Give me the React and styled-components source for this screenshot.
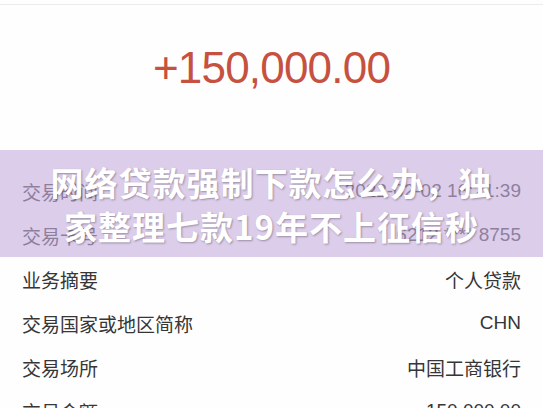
import React from "react";
import styled, { createGlobalStyle } from "styled-components";

const Global = createGlobalStyle`
  html, body { margin: 0; padding: 0; background: #fefefe; overflow: hidden; }
  body { font-family: "Liberation Sans", "Noto Sans CJK SC", sans-serif; }
`;

const Page = styled.div`
  position: relative;
  width: 543px;
  height: 408px;
  overflow: hidden;
  background: #fefefe;
`;

const TopLine = styled.div`
  height: 4px;
  border-bottom: 1px solid #ececec;
`;

const AmountBlock = styled.div`
  height: 164px;
  box-sizing: border-box;
  padding-top: 40px;
  text-align: center;
`;

const Amount = styled.div`
  font-family: "Liberation Sans", sans-serif;
  font-size: 44px;
  line-height: 46px;
  letter-spacing: -0.8px;
  color: #c65140;
`;

const List = styled.div`
  display: flex;
  flex-direction: column;
`;

const Row = styled.div`
  display: flex;
  justify-content: space-between;
  align-items: center;
  height: 44px;
  padding: 0 22px;
  font-size: 19px;
  color: #363636;
  white-space: nowrap;
`;

const Banner = styled.div`
  position: absolute;
  left: 0;
  right: 0;
  top: 150px;
  height: 107px;
  background: rgba(197, 173, 222, 0.61);
  display: flex;
  flex-direction: column;
  align-items: center;
  justify-content: center;
`;

const TitleLine = styled.div`
  font-family: "Noto Sans CJK SC", sans-serif;
  font-weight: 700;
  font-size: 33px;
  line-height: 44px;
  letter-spacing: 1px;
  color: #ffffff;
  text-shadow: 1px 1px 2px rgba(0, 0, 0, 0.3);
  white-space: nowrap;
`;

const rows = [
  ["交易时间", "2022-02-02 16:21:39"],
  ["交易卡号", "6212 **** 8755"],
  ["业务摘要", "个人贷款"],
  ["交易国家或地区简称", "CHN"],
  ["交易场所", "中国工商银行"],
  ["交易金额", "150,000.00"],
];

export default function App() {
  return (
    <Page>
      <Global />
      <TopLine />
      <AmountBlock>
        <Amount>+150,000.00</Amount>
      </AmountBlock>
      <List>
        {rows.map(([k, v]) => (
          <Row key={k}>
            <span>{k}</span>
            <span>{v}</span>
          </Row>
        ))}
      </List>
      <Banner>
        <TitleLine>网络贷款强制下款怎么办，独</TitleLine>
        <TitleLine>家整理七款19年不上征信秒</TitleLine>
      </Banner>
    </Page>
  );
}
